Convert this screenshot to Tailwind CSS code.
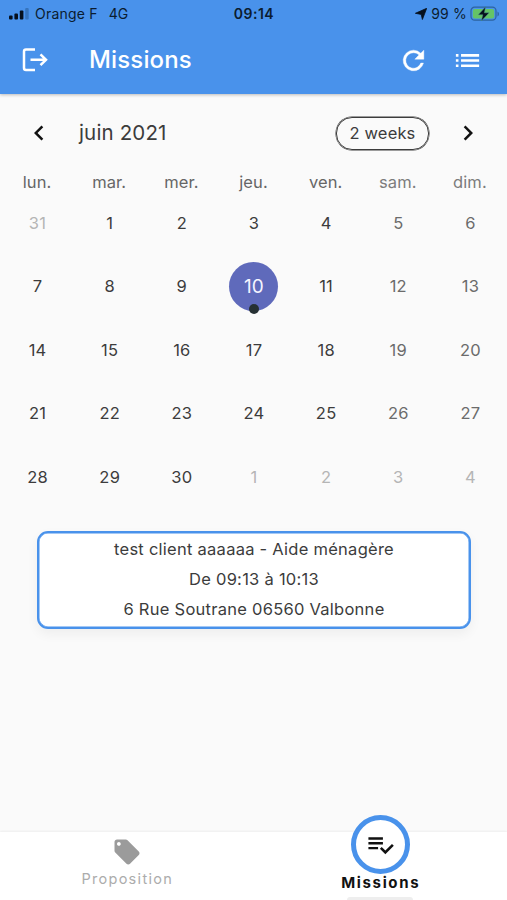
<!DOCTYPE html>
<html lang="fr">
<head>
<meta charset="utf-8">
<title>Missions</title>
<script src="https://cdn.jsdelivr.net/npm/@tailwindcss/browser@4"></script>
</head>
<body class="w-[507px] h-[900px] overflow-hidden bg-[#fafafa] font-['Inter',sans-serif] flex flex-col text-[#3c3c3c]">
<header class="h-[94px] shrink-0 bg-[#4992eb] shadow-[0_1px_3px_rgba(0,0,0,0.25)]">
  <div class="h-7 grid grid-cols-3 items-center text-[14px] leading-none text-[#0b1c30] pl-2 pr-[7px]">
    <div class="flex items-center whitespace-nowrap">
      <svg class="w-[21px] h-3 mr-[6px]" viewBox="0 0 21 12"><g fill="#06101d"><rect x="1" y="7.5" width="3.6" height="4" rx="1"/><rect x="6.4" y="5.5" width="3.6" height="6" rx="1"/><rect x="11.8" y="2.5" width="3.6" height="9" rx="1"/></g><rect x="17.2" y="0" width="3.5" height="11.5" rx="1" fill="#3674bd"/></svg>
      <span class="tracking-[0.2px]">Orange F</span><span class="ml-[11px]">4G</span>
    </div>
    <div class="text-center font-semibold tracking-[0.5px]">09:14</div>
    <div class="flex items-center justify-end whitespace-nowrap">
      <svg class="w-3 h-3 mr-[4px]" viewBox="0 0 12 12"><path d="M11.7.3 7.4 11.5 6.2 6.4.4 5.3z" fill="#06101d" stroke="#06101d" stroke-width=".8" stroke-linejoin="round"/></svg>
      <span class="tracking-[0.2px]">99 %</span>
      <svg class="w-[30px] h-4 ml-[3px]" viewBox="0 0 30 16"><rect x="1" y="1.2" width="25" height="13" rx="3.6" fill="none" stroke="#2d639f" stroke-width="1.2"/><rect x="2.8" y="3" width="21.4" height="9.4" rx="2" fill="#65c466"/><path d="M27.5 5.5c2 1 2 4 0 5z" fill="#2d639f"/><path d="M15.6.8 8.2 8.8h4.6L11.3 15l7.9-8.2h-4.8z" fill="#06101d" stroke="#4d9a90" stroke-width=".5"/></svg>
    </div>
  </div>
  <div class="h-16 flex items-center text-white pl-5 pr-[24px]">
    <svg class="w-[30px] h-[30px]" viewBox="0 0 30 30" fill="none" stroke="currentColor" stroke-width="2.500"><path d="M15 4.500H6a2 2 0 0 0-2 2v16.500a2 2 0 0 0 2 2h9M10.500 14.800H26M20.500 9.400 26 14.800l-5.500 5.400"/></svg>
    <h1 class="ml-[39px] text-[24px] font-medium leading-8 tracking-[0.15px]">Missions</h1>
    <svg class="w-[31px] h-[31px] ml-auto" viewBox="0 0 24 24" fill="currentColor" stroke="currentColor" stroke-width=".3"><path d="M17.650 6.350A7.960 7.960 0 0 0 12 4a8 8 0 1 0 7.730 10h-2.080A6 6 0 1 1 12 6c1.660 0 3.140.690 4.220 1.780L13 11h7V4z"/></svg>
    <svg class="w-[31px] h-[31px] ml-[23px]" viewBox="0 0 24 24" fill="currentColor"><path d="M3 13h2v-2H3v2zm0 4h2v-2H3v2zm0-8h2V7H3v2zm4 4h14v-2H7v2zm0 4h14v-2H7v2zM7 7v2h14V7H7z"/></svg>
  </div>
</header>
<main class="grow">
  <div class="h-[78px] flex items-center pl-[24px] pr-[24px]">
    <svg class="w-[30px] h-[30px]" viewBox="0 0 24 24" fill="#111"><path d="M15.410 7.410 14 6l-6 6 6 6 1.410-1.410L10.830 12z"/></svg>
    <h2 class="ml-[25px] text-[20.500px] leading-7 tracking-[0.15px]">juin 2021</h2>
    <button class="ml-auto w-[93px] h-[33px] rounded-[16px] border border-[#3c3c3c] shadow-[0_0_0_0.5px_#3c3c3c] text-[16.500px] leading-none tracking-[0.15px]">2 weeks</button>
    <svg class="w-[30px] h-[30px] ml-[24px]" viewBox="0 0 24 24" fill="#111"><path d="M8.590 16.590 13.170 12 8.590 7.410 10 6l6 6-6 6z"/></svg>
  </div>
  <div class="grid grid-cols-7 px-[1px] text-center text-[16.500px] leading-[20px] text-[#666] tracking-[0.1px]">
    <span>lun.</span><span>mar.</span><span>mer.</span><span>jeu.</span><span>ven.</span><span class="text-[#7c7c7c]">sam.</span><span class="text-[#7c7c7c]">dim.</span>
  </div>
  <div class="grid grid-cols-7 auto-rows-[63.500px] pl-[1.500px] pr-[0.500px] mt-[-1px] place-items-center text-[16.500px] leading-none tracking-[0.25px]">
    <span class="text-[#b5b5b5]">31</span><span>1</span><span>2</span><span>3</span><span>4</span><span class="text-[#6b6b6b]">5</span><span class="text-[#6b6b6b]">6</span>
    <span>7</span><span>8</span><span>9</span>
    <span class="relative w-[49px] h-[49px] rounded-full bg-[#5f6abb] text-[#f4f4ff] text-[19px] flex items-center justify-center">10<i class="absolute left-[19.500px] top-[42px] w-[10px] h-[10px] rounded-full bg-[#263033]"></i></span>
    <span>11</span><span class="text-[#6b6b6b]">12</span><span class="text-[#6b6b6b]">13</span>
    <span>14</span><span>15</span><span>16</span><span>17</span><span>18</span><span class="text-[#6b6b6b]">19</span><span class="text-[#6b6b6b]">20</span>
    <span>21</span><span>22</span><span>23</span><span>24</span><span>25</span><span class="text-[#6b6b6b]">26</span><span class="text-[#6b6b6b]">27</span>
    <span>28</span><span>29</span><span>30</span><span class="text-[#b5b5b5]">1</span><span class="text-[#b5b5b5]">2</span><span class="text-[#b5b5b5]">3</span><span class="text-[#b5b5b5]">4</span>
  </div>
  <section class="mt-[22px] ml-[37px] w-[434px] h-[98px] rounded-[11px] border-2 border-[#4992eb] bg-white shadow-[inset_0_0_0_0.5px_#4992eb,0_5px_12px_rgba(0,0,0,0.05)] text-center text-[16.500px] leading-[30px] pt-[1px] tracking-[0.26px]">
    <p>test client aaaaaa - Aide ménagère</p>
    <p>De 09:13 à 10:13</p>
    <p>6 Rue Soutrane 06560 Valbonne</p>
  </section>
</main>
<nav class="h-[68px] shrink-0 bg-white grid grid-cols-2 shadow-[0_-1px_2px_rgba(0,0,0,0.05)]">
  <div class="flex flex-col items-center pt-[5px] text-[#9b9b9b]">
    <svg class="w-[30px] h-[30px]" viewBox="0 0 24 24" fill="currentColor"><path d="m21.410 11.580-9-9C12.050 2.220 11.550 2 11 2H4c-1.100 0-2 .9-2 2v7c0 .550.220 1.050.590 1.420l9 9c.360.360.860.580 1.410.580s1.050-.220 1.410-.590l7-7c.370-.360.590-.860.590-1.410s-.230-1.060-.590-1.420zM5.500 7C4.670 7 4 6.330 4 5.500S4.670 4 5.500 4 7 4.670 7 5.500 6.330 7 5.500 7z"/></svg>
    <span class="mt-[2px] pl-[1px] text-[14.500px] leading-5 tracking-[1.300px] text-[#acacac]">Proposition</span>
  </div>
  <div class="relative flex flex-col items-center mt-[-18px]">
    <div class="w-[59px] h-[59px] mt-[1px] rounded-full border-[5px] border-[#4992eb] bg-white flex items-center justify-center">
      <svg class="w-[29px] h-[29px]" viewBox="0 0 24 24" fill="#111"><path d="M14 10H2v2h12v-2zm0-4H2v2h12V6zM2 16h8v-2H2v2zm19.500-4.500L23 13l-6.990 7-4.510-4.500L13 14l3.010 3 5.490-5.500z"/></svg>
    </div>
    <span class="pl-[1px] text-[15px] leading-[18px] font-bold tracking-[1.650px] text-[#111]">Missions</span>
    <i class="absolute bottom-0 w-[66px] h-[3px] rounded-t-full bg-[#eeeeee]"></i>
  </div>
</nav>
</body>
</html>
